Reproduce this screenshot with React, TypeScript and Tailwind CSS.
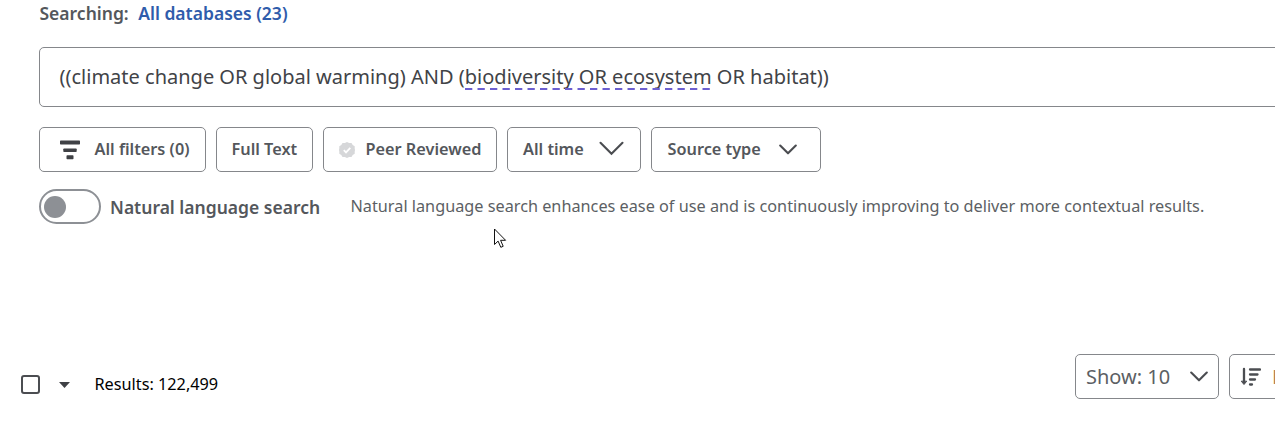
import type { ReactNode } from 'react'

interface FilterButtonProps {
  className: string
  children: ReactNode
}

function FilterButton({ className, children }: FilterButtonProps) {
  return (
    <button
      className={`flex h-[45px] shrink-0 items-center rounded-[5px] border border-[#85878b] text-[16.3px] font-semibold whitespace-nowrap text-[#54575c] ${className}`}
    >
      {children}
    </button>
  )
}

function Chevron({ className }: { className: string }) {
  return (
    <svg className={`shrink-0 ${className}`} viewBox="0 0 18 11" fill="none" stroke="#4b4d51" strokeWidth="2.1" strokeLinecap="round" strokeLinejoin="round">
      <path d="M1.2 1.5 9 9.3l7.8-7.8" />
    </svg>
  )
}

function SearchHeader() {
  return (
    <>
      <div className="ml-[39.5px] flex h-[47px] gap-[9.5px] text-[17.5px] leading-[26px] font-semibold whitespace-nowrap">
        <span className="text-[#54575c]">Searching:</span>
        <a href="#" className="text-[#2f5cab]">All databases (23)</a>
      </div>
      <div className="ml-[39px] flex h-[60px] w-[1260px] items-center rounded-[5px] border border-[#85878b] pl-[19.5px] text-[20px] whitespace-nowrap text-[#414347]">
        <span className="whitespace-pre">((climate change OR global warming) AND (</span>
        <span className="relative">
          biodiversity OR ecosystem
          <svg className="absolute top-[26px] left-0 h-0.5 w-full">
            <line x1="0" y1="1" x2="100%" y2="1" stroke="#6c5fd0" strokeWidth="2" strokeDasharray="7.3 5.2" />
          </svg>
        </span>
        <span className="whitespace-pre"> OR habitat))</span>
      </div>
    </>
  )
}

function Filters() {
  return (
    <div className="mt-5 ml-[39px] flex gap-2.5">
      <FilterButton className="w-[167px] pl-5">
        <svg className="mr-[14.5px] h-5 w-5" viewBox="0 0 20 20" fill="#3f4145">
          <rect x="0" y=".5" width="20" height="4" rx=".7" />
          <rect x="3.3" y="8.5" width="13.4" height="3.5" rx=".7" />
          <rect x="6.5" y="15.2" width="7" height="4" rx=".7" />
        </svg>
        All filters (0)
      </FilterButton>
      <FilterButton className="w-[97px] pl-[14.5px]">Full Text</FilterButton>
      <FilterButton className="w-[174px] pl-[15px]">
        <svg className="mr-[10.5px] h-4 w-4" viewBox="0 0 16 16">
          <path
            fill="#d6d7d9"
            d="M8 0l2.1 1.1 2.4-.1 1.2 2 2 1.2v2.4L16 8l-.3 1.8v2l-2 1.2-1.2 2-2.4-.1L8 16l-2.1-1.1-2.4.1-1.2-2-2-1.2V9.400L0 8l.3-1.800v-2l2-1.200L3.500 1l2.400.1z"
          />
          <path d="M4.800 8.200l2.200 2.200 4.300-4.500" fill="none" stroke="#fff" strokeWidth="1.8" />
        </svg>
        Peer Reviewed
      </FilterButton>
      <FilterButton className="w-[134px] pl-[15px]">
        All time
        <svg className="mb-0.5 ml-[15px] h-[15px] w-[25px] shrink-0" viewBox="0 0 25 15" fill="none" stroke="#4b4d51" strokeWidth="2.1" strokeLinecap="round">
          <path d="M1.5 1.8l11 11 11-11" />
        </svg>
      </FilterButton>
      <FilterButton className="w-[170px] pl-[15.5px]">
        Source type
        <Chevron className="ml-[18px] h-[11px] w-[18px]" />
      </FilterButton>
    </div>
  )
}

function LanguageToggle() {
  return (
    <div className="mt-[17px] ml-[39px] flex h-[35px] items-center whitespace-nowrap">
      <button className="flex h-[35px] w-[62px] items-center rounded-full border-2 border-[#8d9095] pl-[3px]" aria-label="Natural language search">
        <span className="h-[22px] w-[22px] rounded-full bg-[#8d9095]" />
      </button>
      <span className="mt-0.5 ml-[9px] w-[240.5px] text-[17.5px] font-semibold text-[#54575c]">Natural language search</span>
      <span className="text-[16.25px] text-[#5c5f64]">
        Natural language search enhances ease of use and is continuously improving to deliver more contextual results.
      </span>
    </div>
  )
}

function ResultsBar() {
  return (
    <div className="mt-[130px] flex h-[45px] items-center pl-[21px] whitespace-nowrap">
      <span className="mt-4 h-[19px] w-[19px] rounded-[3px] border-2 border-[#4b4d51]" />
      <svg className="mt-4 ml-[19px] h-1.5 w-[11px]" viewBox="0 0 11 6" fill="#3f4145">
        <path d="M0 0h11L5.5 6z" />
      </svg>
      <span className="mt-[15.5px] ml-[24.5px] text-[16.25px] leading-6 text-black">Results: 122,499</span>
      <div className="ml-auto flex w-[200px] shrink-0 gap-2.5">
        <button className="flex h-[45px] w-[144px] shrink-0 items-center rounded-[5px] border border-[#85878b] pl-[10px] text-[20px] text-[#5c5f64]">
          Show: 10
          <Chevron className="ml-5 h-[11px] w-[18px]" />
        </button>
        <button className="flex h-[45px] w-[200px] shrink-0 items-center rounded-[5px] border border-[#85878b] pl-[10px] text-[20px] text-[#b0804f]">
          <svg className="mr-[11px] h-5 w-[21px] shrink-0" viewBox="0 0 21 20" fill="none" stroke="#4b4d51" strokeLinecap="round">
            <path d="M4 2v13" strokeWidth="2.3" />
            <path d="M1.5 14.5 4 17.5l2.5-3z" fill="#4b4d51" strokeLinejoin="round" />
            <path d="M10 2.500h10M10 7.500h7.500M10 12.500h5M10 17.500h2" strokeWidth="2.3" />
          </svg>
          Relevance
        </button>
      </div>
    </div>
  )
}

function Cursor() {
  return (
    <svg className="absolute top-[228px] left-[494px] h-[21px] w-[13px]" viewBox="0 0 13 21" fill="#fff" stroke="#111" strokeWidth="1">
      <path d="M.5 1v15.5l3.6-3.4 2.7 6.2 2.4-1-2.6-6h5z" />
    </svg>
  )
}

export default function App() {
  return (
    <main className="relative h-[433px] w-full overflow-hidden bg-white font-['Noto_Sans',sans-serif]">
      <SearchHeader />
      <Filters />
      <LanguageToggle />
      <ResultsBar />
      <Cursor />
    </main>
  )
}
